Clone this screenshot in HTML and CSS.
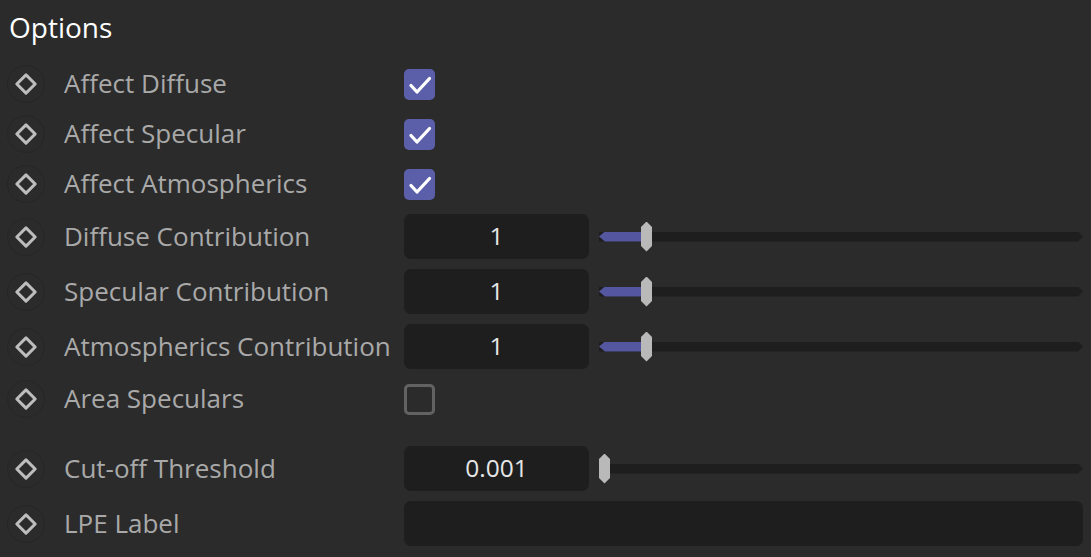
FILE: index.html
```html
<!DOCTYPE html>
<html lang="en">
<head>
	<meta charset="UTF-8">
	<title>Options</title>
	<link rel="stylesheet" href="styles.css">
</head>
<body>
	<div class="panel">
		<h1 class="title">Options</h1>

		<div class="row check-row">
			<span class="anim"><i></i></span>
			<span class="label">Affect Diffuse</span>
			<div class="ctrl"><span class="box on"><svg viewBox="0 0 31 31"><path d="M7 16.5l6 6.5 12.5-13.5"/></svg></span></div>
		</div>
		<div class="row check-row">
			<span class="anim"><i></i></span>
			<span class="label">Affect Specular</span>
			<div class="ctrl"><span class="box on"><svg viewBox="0 0 31 31"><path d="M7 16.5l6 6.5 12.5-13.5"/></svg></span></div>
		</div>
		<div class="row check-row">
			<span class="anim"><i></i></span>
			<span class="label">Affect Atmospherics</span>
			<div class="ctrl"><span class="box on"><svg viewBox="0 0 31 31"><path d="M7 16.5l6 6.5 12.5-13.5"/></svg></span></div>
		</div>

		<div class="row field-row">
			<span class="anim"><i></i></span>
			<span class="label">Diffuse Contribution</span>
			<div class="ctrl">
				<span class="num">1</span>
				<div class="slider"><div class="track"></div><div class="fill" style="width:47px"></div><div class="thumb" style="left:42px"></div></div>
			</div>
		</div>
		<div class="row field-row">
			<span class="anim"><i></i></span>
			<span class="label">Specular Contribution</span>
			<div class="ctrl">
				<span class="num">1</span>
				<div class="slider"><div class="track"></div><div class="fill" style="width:47px"></div><div class="thumb" style="left:42px"></div></div>
			</div>
		</div>
		<div class="row field-row">
			<span class="anim"><i></i></span>
			<span class="label">Atmospherics Contribution</span>
			<div class="ctrl">
				<span class="num">1</span>
				<div class="slider"><div class="track"></div><div class="fill" style="width:47px"></div><div class="thumb" style="left:42px"></div></div>
			</div>
		</div>

		<div class="row check-row">
			<span class="anim"><i></i></span>
			<span class="label">Area Speculars</span>
			<div class="ctrl"><span class="box"></span></div>
		</div>

		<div class="row field-row spaced">
			<span class="anim"><i></i></span>
			<span class="label">Cut-off Threshold</span>
			<div class="ctrl">
				<span class="num">0.001</span>
				<div class="slider"><div class="track"></div><div class="thumb" style="left:0"></div></div>
			</div>
		</div>
		<div class="row field-row">
			<span class="anim"><i></i></span>
			<span class="label">LPE Label</span>
			<div class="ctrl"><span class="text-field"></span></div>
		</div>
	</div>
</body>
</html>
```

FILE: styles.css
```css
*{
	margin:0;
	padding:0;
	box-sizing:border-box;
}
html,body{
	width:100%;
	height:100%;
}
body{
	background:#2b2b2b;
	overflow:hidden;
	font-family:"Open Sans","Noto Sans",sans-serif;
}
.panel{
	display:flex;
	flex-direction:column;
}
.title{
	height:59px;
	padding:7px 0 0 9px;
	font-size:28px;
	font-weight:400;
	line-height:40px;
	color:#fff;
}
.row{
	display:flex;
	align-items:center;
	padding-left:7px;
}
.check-row{
	height:50px;
}
.field-row{
	height:55px;
}
.spaced{
	margin-top:17px;
}
/* keyframe button: faint ring with a diamond inside */
.anim{
	width:38px;
	height:38px;
	border-radius:50%;
	border:1px solid #262626;
	display:flex;
	align-items:center;
	justify-content:center;
	flex-shrink:0;
}
.anim i{
	display:block;
	width:16px;
	height:16px;
	border:3px solid #bdbdbd;
	border-radius:1.5px;
	transform:rotate(45deg);
}
.label{
	width:340px;
	margin-left:19px;
	flex-shrink:0;
	font-size:26px;
	line-height:34px;
	padding-bottom:2px;
	color:#a9a9a9;
	white-space:nowrap;
}
.ctrl{
	flex:1;
	display:flex;
	align-items:center;
	padding-right:8px;
}
.box{
	width:31px;
	height:31px;
	border-radius:5px;
	border:3px solid #626262;
	display:flex;
}
.box.on{
	background:#5b5ea8;
	border:none;
}
.box svg{
	width:31px;
	height:31px;
	fill:none;
	stroke:#fff;
	stroke-width:3.3;
	stroke-linecap:round;
	stroke-linejoin:round;
}
.num{
	width:185px;
	height:45px;
	padding-bottom:3px;
	border-radius:7px;
	background:#1e1e1e;
	display:flex;
	align-items:center;
	justify-content:center;
	font-size:24.5px;
	color:#e6e6e6;
	flex-shrink:0;
}
.slider{
	position:relative;
	flex:1;
	height:30px;
	margin-left:10px;
}
.track{
	position:absolute;
	left:0;
	right:0;
	top:10px;
	height:10px;
	background:#1e1e1e;
	clip-path:polygon(0 0,calc(100% - 5px) 0,100% 50%,calc(100% - 5px) 100%,0 100%);
}
.fill{
	position:absolute;
	left:0;
	top:10px;
	height:10px;
	background:#5457a0;
	clip-path:polygon(0 50%,6px 0,100% 0,100% 100%,6px 100%);
}
.thumb{
	position:absolute;
	top:0;
	width:11px;
	height:30px;
	background:#b9b9b9;
	clip-path:polygon(50% 0,100% 18%,100% 82%,50% 100%,0 82%,0 18%);
}
.text-field{
	flex:1;
	height:45px;
	border-radius:7px;
	background:#1e1e1e;
}
```
